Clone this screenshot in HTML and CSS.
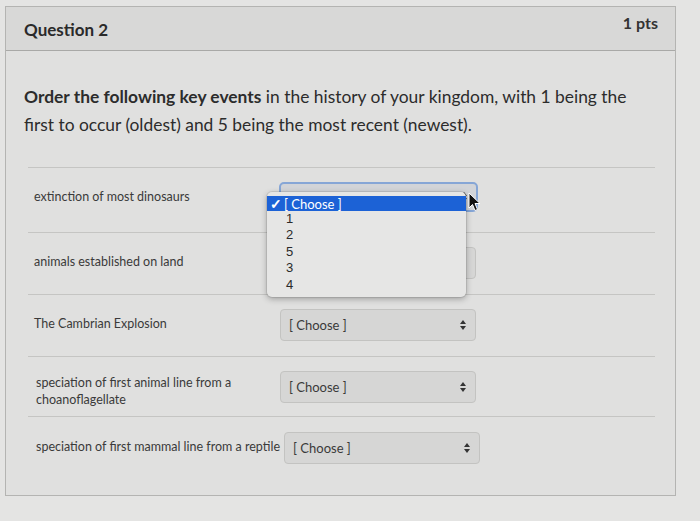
FILE: index.html
```html
<!DOCTYPE html>
<html lang="en">
<head>
    <meta charset="UTF-8">
    <title>Question 2</title>
    <link rel="stylesheet" href="styles.css">
</head>
<body>
    <div class="card">
        <div class="card-header">
            <h2 class="title">Question 2</h2>
            <div class="pts">1 pts</div>
        </div>
        <div class="card-body">
            <p class="prompt"><strong>Order the following key events</strong> in the history of your kingdom, with 1 being the first to occur (oldest) and 5 being the most recent (newest).</p>

            <div class="answers">
                <div class="row open">
                    <div class="label">extinction of most dinosaurs</div>
                    <div class="select-wrap">
                        <div class="select focused">
                            <span></span>
                            <span class="arrows"><i class="up"></i><i class="down"></i></span>
                        </div>
                        <!-- open menu over the first select -->
                        <div class="menu">
                            <div class="menu-item selected"><span class="check">✓</span>[ Choose ]</div>
                            <div class="menu-item">1</div>
                            <div class="menu-item">2</div>
                            <div class="menu-item">5</div>
                            <div class="menu-item">3</div>
                            <div class="menu-item">4</div>
                        </div>
                        <svg class="cursor" width="13" height="20" viewBox="0 0 13 20">
                            <path d="M1 1 L1 16 L4.5 12.5 L7 18.5 L9.5 17.5 L7 11.5 L12 11.5 Z" fill="#111" stroke="#fff" stroke-width="1"/>
                        </svg>
                    </div>
                </div>
                <div class="row">
                    <div class="label">animals established on land</div>
                    <div class="select-wrap">
                        <div class="select">
                            <span>[ Choose ]</span>
                            <span class="arrows"><i class="up"></i><i class="down"></i></span>
                        </div>
                    </div>
                </div>
                <div class="row">
                    <div class="label">The Cambrian Explosion</div>
                    <div class="select-wrap">
                        <div class="select">
                            <span>[ Choose ]</span>
                            <span class="arrows"><i class="up"></i><i class="down"></i></span>
                        </div>
                    </div>
                </div>
                <div class="row tight">
                    <div class="label two-line">speciation of first animal line from a choanoflagellate</div>
                    <div class="select-wrap">
                        <div class="select">
                            <span>[ Choose ]</span>
                            <span class="arrows"><i class="up"></i><i class="down"></i></span>
                        </div>
                    </div>
                </div>
                <div class="row">
                    <div class="label">speciation of first mammal line from a reptile</div>
                    <div class="select-wrap">
                        <div class="select">
                            <span>[ Choose ]</span>
                            <span class="arrows"><i class="up"></i><i class="down"></i></span>
                        </div>
                    </div>
                </div>
            </div>
        </div>
    </div>
</body>
</html>
```

FILE: styles.css
```css
* {
    box-sizing: border-box;
}

body {
    margin: 0;
    background-color: #e4e4e3;
    font-family: Lato, 'Liberation Sans', sans-serif;
    color: #2b2b2b;
    height: 521px;
    overflow: hidden;
}

.card {
    margin: 6px 24px 0 5px;
    border: 1px solid #b4b4b2;
    background-color: #e0e0df;
}

.card-header {
    display: flex;
    justify-content: space-between;
    align-items: flex-start;
    height: 44px;
    padding: 0 17px 0 18px;
    background-color: #d8d8d7;
    border-bottom: 1px solid #a9a9a7;
}

.title {
    margin: 12px 0 0 0;
    font-size: 17px;
    font-weight: 700;
    color: #2a2a2a;
}

.pts {
    margin-top: 6px;
    font-size: 16px;
    font-weight: 700;
    color: #333;
}

.card-body {
    padding: 32px 18px 16px 18px;
}

.prompt {
    margin: 0;
    font-size: 17.4px;
    line-height: 28px;
    color: #2c2c2c;
    width: 630px;
}

.prompt strong {
    font-weight: 700;
}

.answers {
    margin-top: 28px;
    padding: 0 2px 0 4px;
}

.row {
    display: flex;
    align-items: flex-start;
    padding: 14px 0 15px 0;
    border-top: 1px solid #c5c5c3;
}

.row.open {
    padding-bottom: 20px;
    position: relative;
    z-index: 2;
}

.row.tight {
    padding-bottom: 13px;
}

.label {
    flex-shrink: 0;
    min-width: 252px;
    max-width: 252px;
    padding: 6px 4px 0 6px;
    font-size: 12.5px;
    line-height: 17px;
    color: #3a3a3a;
}

.label.two-line {
    padding-top: 3px;
    margin-bottom: -12px;
    padding-left: 8px;
}

.row:last-child {
    padding-top: 15px;
}

.row:last-child .label {
    max-width: none;
    padding-left: 8px;
}

.select-wrap {
    position: relative;
}

.select {
    display: flex;
    justify-content: space-between;
    align-items: center;
    width: 196px;
    height: 32px;
    padding: 0 8px;
    background-color: #d6d6d5;
    border: 1px solid #c3c3c1;
    border-radius: 4px;
    font-size: 13px;
    color: #3a3a3a;
}

.select.focused {
    height: 30px;
    margin-left: -1px;
    width: 199px;
    border: 2px solid #86a6d6;
    border-radius: 5px;
    background-color: #d2d4d8;
}

.arrows {
    display: flex;
    flex-direction: column;
    gap: 2px;
    margin-right: 1px;
}

.arrows i {
    display: block;
    width: 0;
    height: 0;
    border-left: 3px solid transparent;
    border-right: 3px solid transparent;
}

.arrows .up {
    border-bottom: 4px solid #333;
}

.arrows .down {
    border-top: 4px solid #333;
}

/* open dropdown */
.menu {
    position: absolute;
    z-index: 3;
    left: -13px;
    top: 10px;
    width: 199px;
    padding: 4px 0 4px 0;
    background-color: #e6e6e5;
    border-radius: 5px;
    box-shadow: 0 2px 6px rgba(0, 0, 0, 0.3), 0 0 0 1px rgba(0, 0, 0, 0.08);
    font-family: 'Liberation Sans', sans-serif;
    font-size: 13px;
    color: #2a2a2a;
}

.menu-item {
    height: 16.4px;
    line-height: 16px;
    padding-left: 19px;
}

.menu-item.selected {
    height: 15px;
    line-height: 15px;
    padding-left: 3px;
    background-color: #1c62d6;
    color: #fff;
    font-family: Lato, sans-serif;
    font-size: 13px;
}

.check {
    display: inline-block;
    width: 14px;
    font-size: 14px;
    font-weight: 700;
}

.cursor {
    position: absolute;
    z-index: 4;
    left: 188px;
    top: 10px;
}
```
